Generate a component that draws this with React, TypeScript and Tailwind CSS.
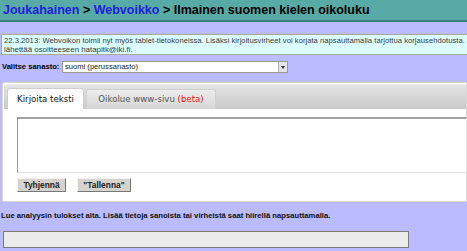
export default function App() {
  return (
    <div className="w-[467px] h-[251px] overflow-hidden bg-[#bbbbff] font-['Liberation_Sans',Arial,sans-serif] text-black">
      {/* Header */}
      <div className="h-[22px] bg-[#58aaa6] border-b-2 border-[#3c7f7c] pl-[3px] pt-[1px] text-[12.5px] font-bold leading-[18px] whitespace-nowrap">
        <span className="text-[#2020d8]">Joukahainen</span>
        <span> &gt; </span>
        <span className="text-[#2020d8]">Webvoikko</span>
        <span> &gt; Ilmainen suomen kielen oikoluku</span>
      </div>

      {/* Notice */}
      <div className="mt-[12px] ml-[1px] w-[500px] h-[21px] bg-[#dcfdfd] border border-[#a9a9a9] pl-[2px] pt-[1px] leading-[9px] text-[#3a3a3a] whitespace-nowrap">
        <div className="text-[7.6px] tracking-[0.04px]">
          22.3.2013: Webvoikon toimii nyt myös tablet-tietokoneissa. Lisäksi kirjoitusvirheet voi korjata napsauttamalla tarjottua korjausehdotusta. Pala
        </div>
        <div className="text-[7.9px]">lähettää osoitteeseen hatapitk@iki.fi.</div>
      </div>

      {/* Vocabulary select */}
      <div className="mt-[6px] h-[12px] flex items-center">
        <span className="ml-[2px] w-[60px] text-[7.6px] font-bold leading-[12px] whitespace-nowrap">Valitse sanasto:</span>
        <div className="w-[226px] h-[12px] bg-white border border-[#9a9a9a] flex items-center">
          <span className="flex-1 pl-[2px] text-[7.6px] leading-[10px] text-[#222]">suomi (perussanasto)</span>
          <span className="w-[9px] h-[10px] bg-[#e4e4e4] border-l border-[#b0b0b0] flex items-center justify-center">
            <span className="w-0 h-0 border-l-[2px] border-r-[2px] border-t-[3px] border-l-transparent border-r-transparent border-t-[#333]" />
          </span>
        </div>
      </div>

      {/* Tab panel */}
      <div className="mt-[9px] ml-[2px] h-[120px] bg-white border border-[#d8d8d8] rounded-tl-[3px] pt-[1px] pl-[1px]">
        <div className="h-[25px] bg-gradient-to-b from-[#e4e4e4] to-[#c9c9c9] border-t border-[#eeeeee] rounded-tl-[3px] flex items-end pl-[3px] gap-[2px] font-['DejaVu_Sans',Verdana,sans-serif] text-[8.6px]">
          <div className="w-[77px] h-[21px] bg-white border border-b-0 border-[#cfcfcf] rounded-t-[3px] flex items-center justify-center text-[#111]">
            Kirjoita teksti
          </div>
          <div className="w-[130px] h-[20px] bg-gradient-to-b from-[#ececec] to-[#d6d6d6] border border-b-0 border-[#d0d0d0] rounded-t-[3px] flex items-center justify-center text-[#555]">
            Oikolue www-sivu&nbsp;<span className="text-[#ee1111]">(beta)</span>
          </div>
        </div>

        <div className="mt-[8px] ml-[13px] w-[450px] h-[56px] bg-white border-t-2 border-l border-b border-r border-t-[#a2a2a2] border-l-[#9a9a9a] border-b-[#e2e2e2] border-r-[#e2e2e2]" />

        <div className="mt-[5px] ml-[13px] flex gap-[11px] text-[8.4px] font-bold">
          <div className="w-[49px] h-[14px] bg-[#d6d3cd] border border-t-[#f4f4f4] border-l-[#f4f4f4] border-b-[#777] border-r-[#777] flex items-center justify-center text-[#222]">
            Tyhjennä
          </div>
          <div className="w-[54px] h-[14px] bg-[#d6d3cd] border border-t-[#f4f4f4] border-l-[#f4f4f4] border-b-[#777] border-r-[#777] flex items-center justify-center text-[#222]">
            "Tallenna"
          </div>
        </div>
      </div>

      {/* Results */}
      <div className="mt-[9px] pl-[1px] text-[7.7px] font-bold leading-[9px] whitespace-nowrap text-[#111]">
        Lue analyysin tulokset alta. Lisää tietoja sanoista tai virheistä saat hiirellä napsauttamalla.
      </div>
      <div className="mt-[11px] ml-[3px] w-[406px] h-[17px] bg-[#ececec] border border-[#7a7a7a]" />
    </div>
  )
}
